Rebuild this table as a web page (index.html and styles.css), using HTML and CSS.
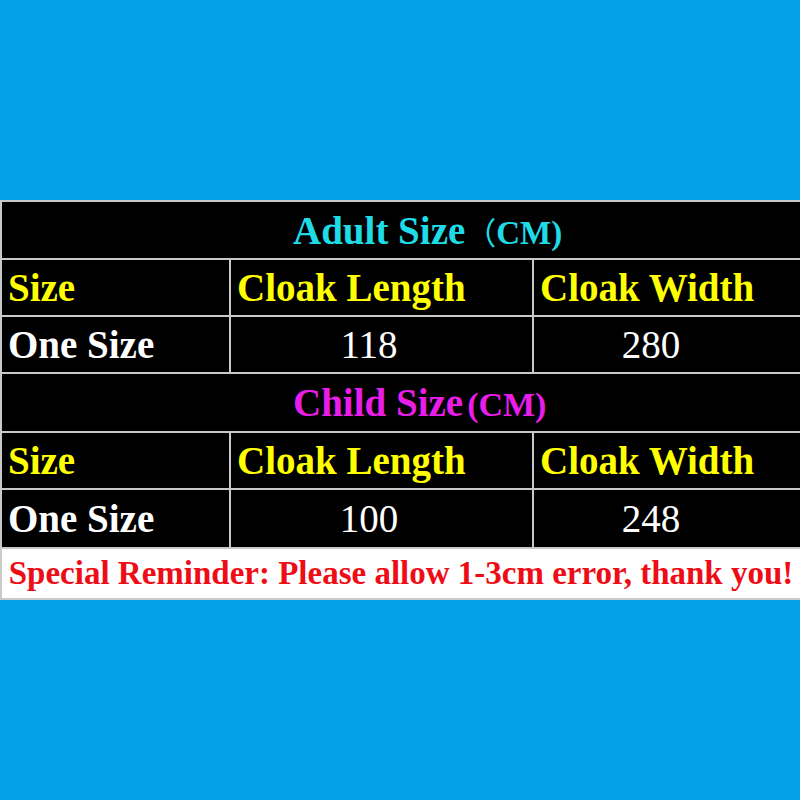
FILE: index.html
```html
<!DOCTYPE html>
<html>
<head>
<meta charset="utf-8">
<link rel="stylesheet" href="styles.css">
</head>
<body>
<div class="page">
  <table class="sizes">
    <colgroup>
      <col class="c1"><col class="c2"><col class="c3">
    </colgroup>
    <tr class="r-title">
      <td colspan="3" class="title adult">Adult Size<span class="fw">（</span><span class="cm">CM)</span></td>
    </tr>
    <tr class="r-head">
      <td class="head">Size</td>
      <td class="head">Cloak Length</td>
      <td class="head">Cloak Width</td>
    </tr>
    <tr class="r-data">
      <td class="label">One Size</td>
      <td class="num">118</td>
      <td class="num num3">280</td>
    </tr>
    <tr class="r-title2">
      <td colspan="3" class="title child">Child Size<span class="cm2">(CM)</span></td>
    </tr>
    <tr class="r-head">
      <td class="head">Size</td>
      <td class="head">Cloak Length</td>
      <td class="head">Cloak Width</td>
    </tr>
    <tr class="r-data2">
      <td class="label">One Size</td>
      <td class="num">100</td>
      <td class="num num3">248</td>
    </tr>
    <tr class="r-note">
      <td colspan="3" class="note">Special Reminder: Please allow 1-3cm error, thank you!</td>
    </tr>
  </table>
</div>
</body>
</html>
```
FILE: styles.css
```css
html, body {
  margin: 0;
  padding: 0;
  background: #05a1e7;
}
.page {
  width: 800px;
  height: 800px;
  padding-top: 200px;
  box-sizing: border-box;
}
.sizes {
  width: 800px;
  border-collapse: collapse;
  table-layout: fixed;
  background: #000;
  font-family: "Liberation Serif", "Times New Roman", serif;
}
.c1 { width: 229px; }
.c2 { width: 303px; }
.c3 { width: 268px; }
.sizes td {
  border: 2px solid #c9c9c9;
  padding: 0 0 0 6px;
  white-space: nowrap;
  line-height: 1;
}
.r-title td { height: 56px; }
.r-head td { height: 55px; }
.r-data td { height: 55px; }
.r-title2 td { height: 57px; }
.r-data2 td { height: 57px; }
.r-note td { height: 49px; }
.title {
  font-weight: bold;
  font-size: 39px;
  padding-left: 291px !important;
}
.adult { color: #1fdbe6; }
.child { color: #e81ee8; }
.fw {
  font-family: "Noto Sans CJK SC", sans-serif;
  font-weight: normal;
  font-size: 31px;
}
.cm {
  font-size: 33px;
}
.cm2 {
  font-size: 34px;
  margin-left: 4px;
}
.head {
  color: #ffff00;
  font-weight: bold;
  font-size: 39px;
}
.label {
  color: #fff;
  font-weight: bold;
  font-size: 39px;
}
.num {
  color: #fff;
  font-size: 39px;
  text-align: center;
  padding: 0 25px 0 0 !important;
}
.num3 {
  padding-right: 32px !important;
}
.note {
  background: #fff;
  color: #ee0d16;
  font-weight: bold;
  font-size: 33px;
  text-align: center;
  padding: 0 !important;
}
```
